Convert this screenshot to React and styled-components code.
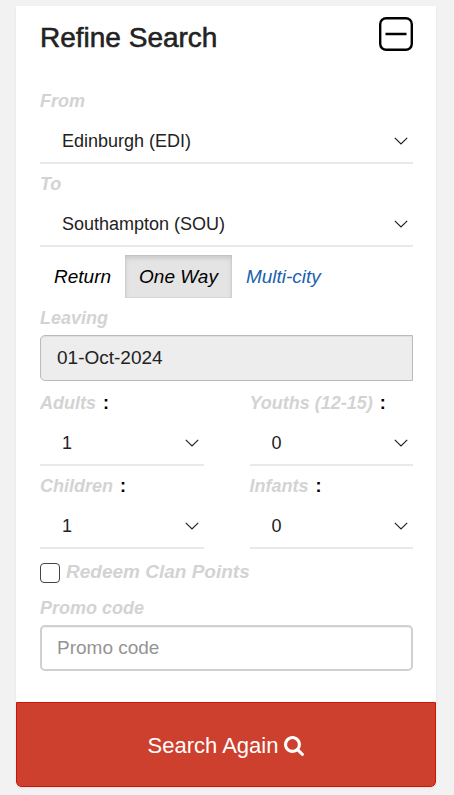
import React, { useState } from "react";
import styled, { createGlobalStyle, css } from "styled-components";

const GlobalStyle = createGlobalStyle`
  *, *::before, *::after { box-sizing: border-box; }
  body {
    margin: 0;
    background: #f2f2f2;
    color: #000;
    font-family: "Liberation Sans", Arial, sans-serif;
    font-size: 18px;
    line-height: 28px;
  }
  button, input, select { font-family: inherit; color: inherit; }
`;

const Page = styled.main`
  padding: 6px 18px 8px 16px;
`;

const Card = styled.form`
  overflow: hidden;
  background: #fff;
  border-radius: 0 0 5px 5px;
  box-shadow: 0 1px 2px rgba(0, 0, 0, 0.08);
`;

const Header = styled.header`
  display: flex;
  align-items: flex-start;
  justify-content: space-between;
  padding: 11px 23px 0 24px;
`;

const Title = styled.h2`
  margin: 0;
  padding-top: 5px;
  color: #222;
  font-size: 28px;
  font-weight: 400;
  line-height: 32px;
  -webkit-text-stroke: 0.02em #222;
`;

const CollapseButton = styled.button`
  display: flex;
  padding: 0;
  border: 0;
  background: none;
  cursor: pointer;
`;

const Fields = styled.div`
  display: flex;
  flex-direction: column;
  gap: 6px;
  padding: 33px 23px 31px 24px;
`;

const Field = styled.div`
  display: flex;
  flex-direction: column;
  gap: ${(p) => (p.$boxed ? "3px" : "0")};
  min-width: 0;
`;

const LabelLine = styled.div`
  display: flex;
  gap: 7px;
  white-space: nowrap;
`;

const Label = styled.label`
  color: #d3d3d3;
  font-size: ${(p) => (p.$large ? "19px" : "18px")};
  font-style: italic;
  font-weight: 700;
`;

const Colon = styled.span`
  font-weight: 700;
`;

const SelectBox = styled.div`
  display: grid;
  grid-template-columns: 1fr auto;
  align-items: center;
  height: 49px;
  padding-top: 4px;
  border-bottom: 2px solid #e9e9e9;

  svg {
    grid-area: 1 / 2;
    margin-right: 5px;
    pointer-events: none;
  }
`;

const Select = styled.select`
  grid-area: 1 / 1 / 2 / 3;
  width: 100%;
  height: 40px;
  padding: 0 24px 0 22px;
  border: 0;
  appearance: none;
  background: transparent;
  color: #222;
  font-size: 18px;
`;

const TripTypes = styled.div`
  display: flex;
  margin-top: 2px;
`;

const tripStyle = css`
  height: 43px;
  padding: 0 14px;
  border: 0;
  background: transparent;
  font-size: 19px;
  font-style: italic;
  line-height: 43px;
  white-space: nowrap;
`;

const TripButton = styled.button`
  ${tripStyle}
  ${(p) =>
    p.$active &&
    css`
      background: #e4e4e4;
      box-shadow: inset 0 3px 5px rgba(0, 0, 0, 0.13), inset 0 0 0 1px rgba(0, 0, 0, 0.04);
    `}
`;

const TripLink = styled.a`
  ${tripStyle}
  color: #1a60b0;
  text-decoration: none;
`;

const TextInput = styled.input`
  width: 100%;
  height: 46px;
  padding: 0 15px;
  border: 2px solid #d0d0d0;
  border-radius: 5px;
  background: #fff;
  box-shadow: inset 0 1px 1px rgba(0, 0, 0, 0.06);
  color: #222;
  font-size: 19px;

  &::placeholder { color: #949494; opacity: 1; }

  &:read-only {
    padding: 0 16px;
    border: 1px solid #bbb;
    border-radius: 5px 0 0 5px;
    background: #ededed;
  }
`;

const Passengers = styled.div`
  display: grid;
  grid-template-columns: 1fr 1fr;
  gap: 6px 46px;
  margin-top: 2px;
`;

const CheckRow = styled.div`
  display: flex;
  align-items: center;
  gap: 6px;
  height: 33px;
`;

const Checkbox = styled.input`
  flex: none;
  width: 20px;
  height: 20px;
  margin: 2px 0 0;
  appearance: none;
  border: 1px solid #444;
  border-radius: 4px;
  background: #fff;

  &:checked { background: #1a60b0; box-shadow: inset 0 0 0 3px #fff; }
`;

const SubmitButton = styled.button`
  display: flex;
  align-items: center;
  justify-content: center;
  gap: 6px;
  width: 100%;
  height: 85px;
  padding: 2px 0 0;
  border: 1px solid #cd1409;
  border-radius: 0 0 5px 5px;
  background: #cd402e;
  color: #fff;
  font-size: 22px;
  cursor: pointer;
`;

const MinusIcon = () => (
  <svg width="34" height="34" viewBox="0 0 34 34" fill="none" stroke="#000" aria-hidden="true">
    <rect x="1.2" y="1.2" width="31.6" height="31.6" rx="6" strokeWidth="2.4" />
    <path d="M6.5 17h21" strokeWidth="2.4" />
  </svg>
);

const Chevron = () => (
  <svg width="14" height="8" viewBox="0 0 14 8" fill="none" stroke="#222" aria-hidden="true">
    <path d="M.8.8 7 7 13.2.8" strokeWidth="1.2" />
  </svg>
);

const SearchIcon = () => (
  <svg width="20" height="20" viewBox="0 128 1664 1664" fill="currentColor" aria-hidden="true">
    <path d="M1152 832q0-185-131.5-316.5T704 384 387.5 515.5 256 832t131.5 316.5T704 1280t316.5-131.5T1152 832zm512 832q0 52-38 90t-90 38q-54 0-90-38l-343-342q-179 124-399 124-143 0-273.5-55.5t-225-150-150-225T0 832t55.5-273.5 150-225 225-150T704 128t273.5 55.5 225 150 150 225T1408 832q0 220-124 399l343 343q37 37 37 90z" />
  </svg>
);

function SelectField({ id, label, options, value, colon }) {
  return (
    <Field>
      <LabelLine>
        <Label htmlFor={id}>{label}</Label>
        {colon && <Colon>:</Colon>}
      </LabelLine>
      <SelectBox>
        <Select id={id} defaultValue={value}>
          {options.map((o) => (
            <option key={o}>{o}</option>
          ))}
        </Select>
        <Chevron />
      </SelectBox>
    </Field>
  );
}

const airports = ["Edinburgh (EDI)", "Southampton (SOU)"];
const counts = ["0", "1", "2", "3", "4", "5", "6"];
const passengers = [
  { id: "adults", label: "Adults", value: "1" },
  { id: "youths", label: "Youths (12-15)", value: "0" },
  { id: "children", label: "Children", value: "1" },
  { id: "infants", label: "Infants", value: "0" },
];

export default function App() {
  const [trip, setTrip] = useState("One Way");
  const [open, setOpen] = useState(true);

  return (
    <Page>
      <GlobalStyle />
      <Card onSubmit={(e) => e.preventDefault()}>
        <Header>
          <Title>Refine Search</Title>
          <CollapseButton
            type="button"
            aria-label="Toggle search form"
            aria-expanded={open}
            onClick={() => setOpen(!open)}
          >
            <MinusIcon />
          </CollapseButton>
        </Header>
        {open && (
          <Fields>
            <SelectField id="from" label="From" options={airports} value={airports[0]} />
            <SelectField id="to" label="To" options={airports} value={airports[1]} />
            <TripTypes>
              {["Return", "One Way"].map((t) => (
                <TripButton
                  key={t}
                  type="button"
                  $active={trip === t}
                  aria-pressed={trip === t}
                  onClick={() => setTrip(t)}
                >
                  {t}
                </TripButton>
              ))}
              <TripLink href="#multi-city">Multi-city</TripLink>
            </TripTypes>
            <Field $boxed>
              <Label htmlFor="leaving">Leaving</Label>
              <TextInput id="leaving" type="text" defaultValue="01-Oct-2024" readOnly />
            </Field>
            <Passengers>
              {passengers.map((p) => (
                <SelectField key={p.id} {...p} options={counts} colon />
              ))}
            </Passengers>
            <CheckRow>
              <Checkbox id="redeem" type="checkbox" />
              <Label htmlFor="redeem" $large>Redeem Clan Points</Label>
            </CheckRow>
            <Field $boxed>
              <Label htmlFor="promo">Promo code</Label>
              <TextInput id="promo" type="text" placeholder="Promo code" />
            </Field>
          </Fields>
        )}
        <SubmitButton type="submit">
          Search Again
          <SearchIcon />
        </SubmitButton>
      </Card>
    </Page>
  );
}
